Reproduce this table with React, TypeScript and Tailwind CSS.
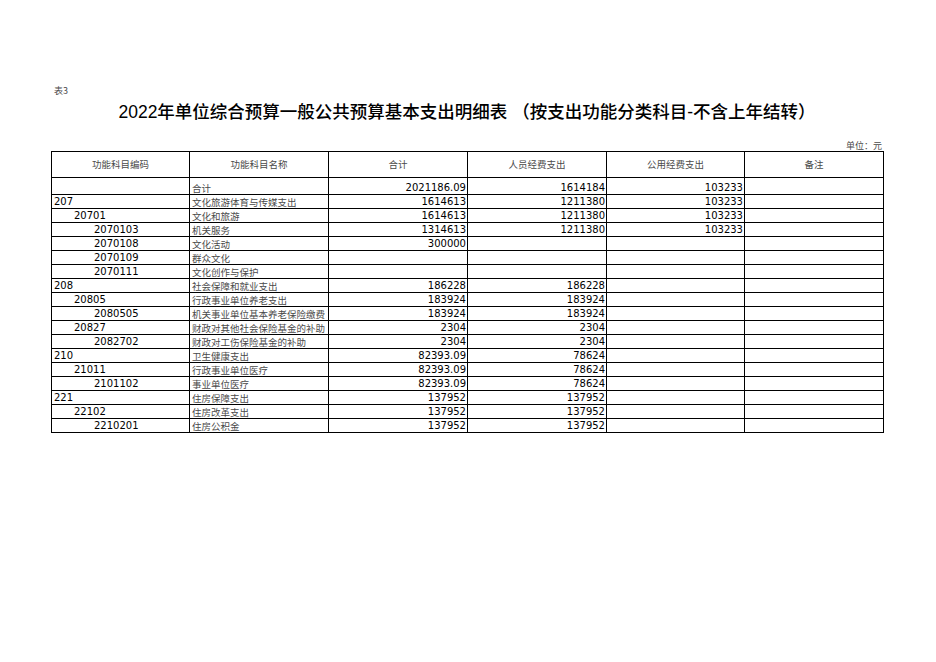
const COLS = [138, 139, 139, 139, 138, 139]

const HEAD = ['功能科目编码', '功能科目名称', '合计', '人员经费支出', '公用经费支出', '备注']

type Row = [string, number, string, string, string, string]

const ROWS: Row[] = [
  ['', 0, '合计', '2021186.09', '1614184', '103233'],
  ['207', 0, '文化旅游体育与传媒支出', '1614613', '1211380', '103233'],
  ['20701', 1, '文化和旅游', '1614613', '1211380', '103233'],
  ['2070103', 2, '机关服务', '1314613', '1211380', '103233'],
  ['2070108', 2, '文化活动', '300000', '', ''],
  ['2070109', 2, '群众文化', '', '', ''],
  ['2070111', 2, '文化创作与保护', '', '', ''],
  ['208', 0, '社会保障和就业支出', '186228', '186228', ''],
  ['20805', 1, '行政事业单位养老支出', '183924', '183924', ''],
  ['2080505', 2, '机关事业单位基本养老保险缴费', '183924', '183924', ''],
  ['20827', 1, '财政对其他社会保险基金的补助', '2304', '2304', ''],
  ['2082702', 2, '财政对工伤保险基金的补助', '2304', '2304', ''],
  ['210', 0, '卫生健康支出', '82393.09', '78624', ''],
  ['21011', 1, '行政事业单位医疗', '82393.09', '78624', ''],
  ['2101102', 2, '事业单位医疗', '82393.09', '78624', ''],
  ['221', 0, '住房保障支出', '137952', '137952', ''],
  ['22102', 1, '住房改革支出', '137952', '137952', ''],
  ['2210201', 2, '住房公积金', '137952', '137952', ''],
]

const INDENT = ['pl-[2px]', 'pl-[22px]', 'pl-[42px]']

const num = "font-['DejaVu_Sans',sans-serif] text-[10px] text-black text-right pr-[1px]"
const cjk = "font-['Noto_Sans_CJK_SC',sans-serif] text-[9.5px] text-[#4a4a4a]"

export default function App() {
  return (
    <div className="w-[936px] h-[662px] bg-white">
      <div className="ml-[51px] w-[832px] pt-[85px]">
        <p className={`${cjk} leading-[12px] pl-[3px] text-[9px]`}>表3</p>

        <h1 className="mt-[4px] text-center leading-[22px] text-[17.5px] font-medium text-black font-['Liberation_Sans','Noto_Sans_CJK_SC',sans-serif]">
          2022年单位综合预算一般公共预算基本支出明细表 （按支出功能分类科目-不含上年结转）
        </h1>

        <p className={`${cjk} mt-[18px] leading-[10px] text-right pr-[1px] text-[9px]`}>单位：元</p>

        <table className="table-fixed border-collapse w-[832px]">
          <colgroup>
            {COLS.map((w, i) => <col key={i} style={{ width: w }} />)}
          </colgroup>
          <thead>
            <tr className="h-[26px]">
              {HEAD.map(h => (
                <th key={h} className={`${cjk} border border-black font-normal text-center align-middle p-0`}>
                  {h}
                </th>
              ))}
            </tr>
          </thead>
          <tbody>
            {ROWS.map(([code, lvl, name, total, staff, pub], i) => (
              <tr key={i} className={i === 0 ? 'h-[17px]' : 'h-[14px]'}>
                <td className={`border border-black p-0 align-bottom leading-[12px] ${INDENT[lvl]} font-['DejaVu_Sans',sans-serif] text-[10px] text-black`}>
                  {code}
                </td>
                <td className={`border border-black p-0 pl-[2px] align-bottom leading-[12px] overflow-hidden whitespace-nowrap ${cjk}`}>
                  {name}
                </td>
                <td className={`border border-black p-0 align-bottom leading-[12px] ${num}`}>{total}</td>
                <td className={`border border-black p-0 align-bottom leading-[12px] ${num}`}>{staff}</td>
                <td className={`border border-black p-0 align-bottom leading-[12px] ${num}`}>{pub}</td>
                <td className="border border-black p-0" />
              </tr>
            ))}
          </tbody>
        </table>
      </div>
    </div>
  )
}
